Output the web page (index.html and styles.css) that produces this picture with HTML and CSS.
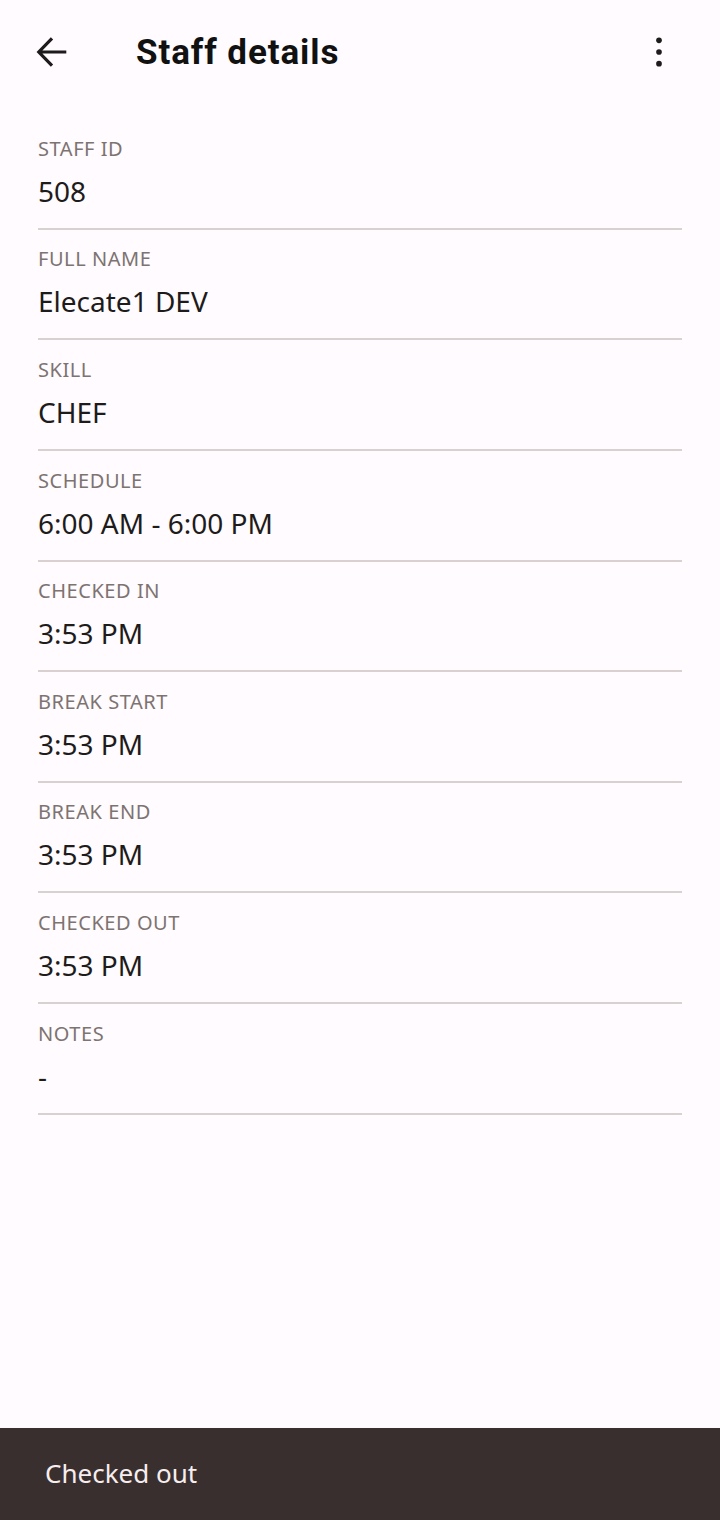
FILE: index.html
```html
<!DOCTYPE html>
<html lang="en">
<head>
<meta charset="utf-8">
<title>Staff details</title>
<link rel="stylesheet" href="styles.css">
</head>
<body>
<div class="screen">
  <header class="appbar">
    <button class="icon-btn back" aria-label="Back">
      <svg width="44" height="44" viewBox="0 0 24 24"><path d="M19.8 12H4.8M12 4.6L4.8 12l7.2 7.4" fill="none" stroke="#1d1b1b" stroke-width="1.75"/></svg>
    </button>
    <h1 class="title">Staff details</h1>
    <button class="icon-btn more" aria-label="More options">
      <svg width="40" height="40" viewBox="0 0 24 24"><circle cx="12" cy="5" r="1.7" fill="#1d1b1b"/><circle cx="12" cy="12" r="1.7" fill="#1d1b1b"/><circle cx="12" cy="19" r="1.7" fill="#1d1b1b"/></svg>
    </button>
  </header>
  <main class="details">
    <div class="row"><div class="label">STAFF ID</div><div class="value">508</div></div>
    <div class="row"><div class="label">FULL NAME</div><div class="value">Elecate1 DEV</div></div>
    <div class="row"><div class="label">SKILL</div><div class="value">CHEF</div></div>
    <div class="row"><div class="label">SCHEDULE</div><div class="value">6:00 AM - 6:00 PM</div></div>
    <div class="row"><div class="label">CHECKED IN</div><div class="value">3:53 PM</div></div>
    <div class="row"><div class="label">BREAK START</div><div class="value">3:53 PM</div></div>
    <div class="row"><div class="label">BREAK END</div><div class="value">3:53 PM</div></div>
    <div class="row"><div class="label">CHECKED OUT</div><div class="value">3:53 PM</div></div>
    <div class="row"><div class="label">NOTES</div><div class="value">-</div></div>
  </main>
  <div class="snackbar">Checked out</div>
</div>
</body>
</html>
```
FILE: styles.css
```css
* { box-sizing: border-box; }
html, body { margin: 0; padding: 0; }
body {
  background: #fffbfe;
  font-family: "Noto Sans", "Open Sans", sans-serif;
  color: #1e1b1b;
}
.screen {
  width: 720px;
  height: 1520px;
  display: flex;
  flex-direction: column;
}
.appbar {
  height: 104px;
  display: flex;
  align-items: center;
  padding: 0 29px 0 20px;
}
.icon-btn {
  background: none;
  border: 0;
  padding: 0;
  width: 64px;
  height: 64px;
  display: flex;
  align-items: center;
  justify-content: center;
}
.title {
  margin: 0 0 0 52px;
  flex: 1;
  font-family: Roboto, "Noto Sans", sans-serif;
  font-weight: 700;
  font-size: 35px;
  color: #111;
  letter-spacing: 0.9px;
}
.details {
  flex: 1;
  padding: 15.2px 38px 0;
}
.row {
  padding: 16.6px 0 17px;
  border-bottom: 2px solid #d9d1cf;
}
.label {
  font-size: 20px;
  line-height: 26px;
  color: #7d7371;
  letter-spacing: 0.55px;
}
.value {
  margin-top: 9px;
  font-size: 28px;
  line-height: 40px;
  color: #1e1b1b;
}
.snackbar {
  height: 92px;
  background: #3a2f2f;
  color: #f6eeee;
  font-size: 26px;
  display: flex;
  align-items: center;
  padding: 0 45px 3px;
}
```
